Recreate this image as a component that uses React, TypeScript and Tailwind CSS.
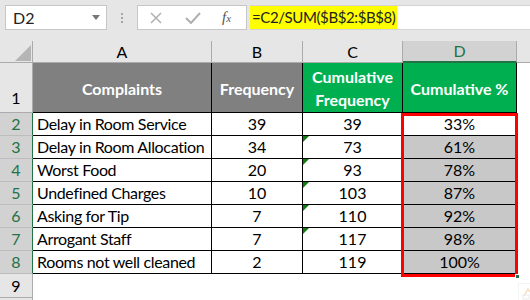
import React from "react";

const F = { fontFamily: "Lato, 'Open Sans', sans-serif" };

const rows: [string, number, number, string][] = [
  ["Delay in Room Service", 39, 39, "33%"],
  ["Delay in Room Allocation", 34, 73, "61%"],
  ["Worst Food", 20, 93, "78%"],
  ["Undefined Charges", 10, 103, "87%"],
  ["Asking for Tip", 7, 110, "92%"],
  ["Arrogant Staff", 7, 117, "98%"],
  ["Rooms not well cleaned", 2, 119, "100%"],
];

function Tri() {
  return (
    <div className="absolute left-0 top-0 w-0 h-0 border-t-[6px] border-r-[6px] border-t-[#127a12] border-r-transparent" />
  );
}

export default function App() {
  return (
    <div
      className="relative w-[530px] h-[300px] overflow-hidden bg-white text-black"
      style={F}
    >
      {/* Formula bar */}
      <div className="h-[41px] bg-[#e6e6e6] flex items-start pt-[5px] pl-[5px]">
        <div className="w-[102px] h-[25px] bg-white border border-[#c6c6c6] flex items-center justify-between pl-[7px] pr-[6px] text-[16px] text-[#222]">
          <span>D2</span>
          <svg width="8" height="5" viewBox="0 0 8 5">
            <path d="M0 0 H8 L4 5 Z" fill="#777" />
          </svg>
        </div>
        <div className="w-[30px] h-[25px] flex flex-col items-center justify-center gap-[2px]">
          <div className="w-[2px] h-[2px] bg-[#a6a6a6]" />
          <div className="w-[2px] h-[2px] bg-[#a6a6a6]" />
          <div className="w-[2px] h-[2px] bg-[#a6a6a6]" />
        </div>
        <div className="w-[110px] h-[25px] bg-white border border-[#c6c6c6] flex items-center">
          <svg width="12" height="12" viewBox="0 0 12 12" className="ml-[12px]">
            <path d="M1 1 L11 11 M11 1 L1 11" stroke="#b0b0b0" strokeWidth="1.5" />
          </svg>
          <svg width="16" height="12" viewBox="0 0 16 12" className="ml-[23px]">
            <path d="M1 6 L6 11 L15 1" stroke="#b0b0b0" strokeWidth="2" fill="none" />
          </svg>
          <span
            className="ml-[21px] text-[15px] italic text-[#555] leading-none"
            style={{ fontFamily: "'Liberation Serif', serif" }}
          >
            f<span className="text-[11px]">x</span>
          </span>
        </div>
        <div className="ml-[3px] flex-1 h-[25px] bg-white border-t border-b border-[#d4d4d4] flex items-stretch">
          <div className="w-[147px] bg-[#ffff00] flex items-center pl-[2px] text-[15px] tracking-[-0.4px] text-[#222]">
            =C2/SUM($B$2:$B$8)
          </div>
        </div>
      </div>

      {/* Column headers */}
      <div className="flex h-[22px] bg-[#e6e6e6] text-[16px]">
        <div className="relative w-[33px] border-r border-b border-[#ababab]">
          <svg width="16" height="16" viewBox="0 0 16 16" className="absolute left-[15px] top-[4px]">
            <path d="M16 0 V16 H0 Z" fill="#b5b5b5" />
          </svg>
        </div>
        <div className="w-[179px] border-r border-b border-[#ababab] flex items-center justify-center">A</div>
        <div className="w-[91px] border-r border-b border-[#ababab] flex items-center justify-center">B</div>
        <div className="w-[100px] border-r border-b border-[#ababab] flex items-center justify-center">C</div>
        <div className="w-[114px] bg-[#d2d2d2] border-r border-[#ababab] border-b-2 border-b-[#217346] flex items-center justify-center text-[#217346]">D</div>
        <div className="flex-1 border-b border-[#ababab]" />
      </div>

      {/* Row 1 */}
      <div className="flex h-[50px] text-[16px]">
        <div className="w-[33px] bg-[#e6e6e6] border-r border-b border-[#ababab] flex items-end justify-center pb-[2px]">1</div>
        <div className="w-[179px] bg-[#808080] border-r border-b border-black flex items-center justify-center pt-[3px] font-bold text-white">Complaints</div>
        <div className="w-[91px] bg-[#808080] border-r border-b border-black flex items-center justify-center pt-[3px] font-bold text-white">Frequency</div>
        <div className="w-[100px] bg-[#00b050] border-r border-b border-black flex flex-col items-center justify-center font-bold text-white leading-[23px]">
          <span>Cumulative</span>
          <span>Frequency</span>
        </div>
        <div className="w-[114px] bg-[#00b050] border-r border-b border-black flex items-center justify-center pt-[3px] font-bold text-white">Cumulative %</div>
        <div className="flex-1" />
      </div>

      {rows.map(([name, f, c, p], i) => (
        <div key={i} className="flex h-[23px] text-[16px]">
          <div className="w-[33px] bg-[#d2d2d2] border-r border-r-[#217346] border-b border-b-[#bdbdbd] flex items-center justify-center text-[#217346]">
            {i + 2}
          </div>
          <div className="w-[179px] border-r border-b border-black flex items-center pl-[4px] whitespace-nowrap overflow-hidden tracking-[-0.35px]">{name}</div>
          <div className="w-[91px] border-r border-b border-black flex items-center justify-center">{f}</div>
          <div className="relative w-[100px] border-r border-b border-black flex items-center justify-center">
            {i >= 1 && i <= 5 && <Tri />}
            {c}
          </div>
          <div className={`w-[114px] border-r border-b border-black flex items-center justify-center ${i === 0 ? "bg-white" : "bg-[#c8c8c8]"}`}>{p}</div>
          <div className="flex-1" />
        </div>
      ))}

      {/* Row 9 */}
      <div className="flex h-[24px] text-[16px]">
        <div className="w-[33px] bg-[#e6e6e6] border-r border-b border-[#ababab] flex items-center justify-center">9</div>
        <div className="flex-1" />
      </div>
      <div className="flex h-[10px]">
        <div className="w-[33px] bg-[#e6e6e6] border-r border-[#ababab]" />
      </div>

      {/* Selection border */}
      <div className="absolute left-[401px] top-[113px] w-[117px] h-[164px] border-[3px] border-[#ff0000]" />
      <div className="absolute left-[515px] top-[274px] w-[5px] h-[5px] bg-[#217346] border border-white" />

      {/* Quick analysis icon (faint) */}
      <div className="absolute left-[518px] top-[283px] w-[18px] h-[18px] border border-[#eeeeee] bg-white opacity-60">
        <svg width="14" height="14" viewBox="0 0 14 14" className="ml-[2px] mt-[2px]">
          <path d="M3 10 L7 3 L9 6" stroke="#f3c9a0" strokeWidth="1.5" fill="none" />
          <rect x="2" y="9" width="6" height="4" fill="none" stroke="#e0e0e0" />
        </svg>
      </div>
    </div>
  );
}
